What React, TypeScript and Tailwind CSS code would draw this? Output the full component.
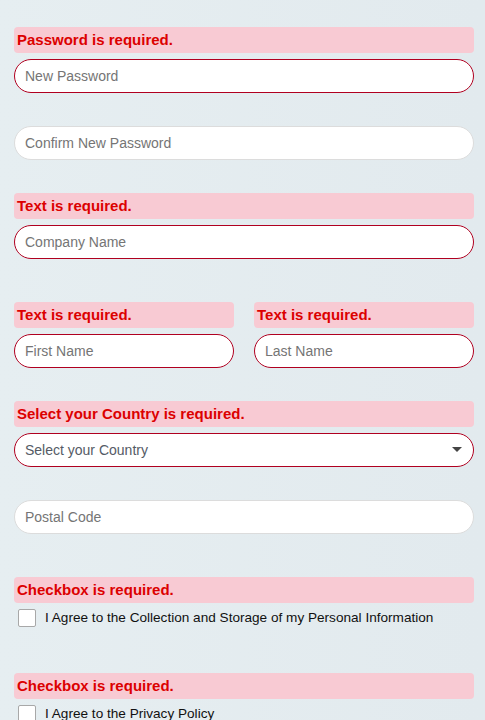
import React from 'react'

function ErrorBox({ text }: { text: string }) {
  return (
    <div className="h-[26px] rounded-[4px] bg-[#f8cad3] px-[3px] flex items-center mb-[6px]">
      <span className="text-[#dc0000] font-bold text-[15px] font-['Liberation_Sans',sans-serif]">{text}</span>
    </div>
  )
}

function Input({ placeholder, invalid }: { placeholder: string; invalid?: boolean }) {
  return (
    <div
      className={`h-[34px] rounded-full bg-white flex items-center px-[10px] border ${
        invalid ? 'border-[#b00020]' : 'border-[#dcdcdc]'
      }`}
    >
      <span className="text-[#757575] text-[14px] font-['Liberation_Sans',sans-serif]">{placeholder}</span>
    </div>
  )
}

function Checkbox({ label }: { label: string }) {
  return (
    <div className="flex items-center gap-[9px] pl-[4px] h-[18px]">
      <div className="w-[18px] h-[18px] bg-white border border-[#a8a8a8] rounded-[2px]" />
      <span className="text-[#111] text-[13.6px] font-['Liberation_Sans',sans-serif]">{label}</span>
    </div>
  )
}

export default function App() {
  return (
    <div className="w-[485px] h-[720px] overflow-hidden bg-gradient-to-r from-[#e6eef1] to-[#e2eaee] pl-[14px] pr-[11px] pt-[27px]">
      <div>
        <ErrorBox text="Password is required." />
        <Input placeholder="New Password" invalid />
      </div>
      <div className="mt-[33px]">
        <Input placeholder="Confirm New Password" />
      </div>
      <div className="mt-[33px]">
        <ErrorBox text="Text is required." />
        <Input placeholder="Company Name" invalid />
      </div>
      <div className="mt-[43px] grid grid-cols-2 gap-[20px]">
        <div>
          <ErrorBox text="Text is required." />
          <Input placeholder="First Name" invalid />
        </div>
        <div>
          <ErrorBox text="Text is required." />
          <Input placeholder="Last Name" invalid />
        </div>
      </div>
      <div className="mt-[33px]">
        <ErrorBox text="Select your Country is required." />
        <div className="h-[34px] rounded-full bg-white flex items-center justify-between pl-[10px] pr-[11px] border border-[#b00020]">
          <span className="text-[#555b66] text-[14px] font-['Liberation_Sans',sans-serif]">Select your Country</span>
          <svg width="10" height="6" viewBox="0 0 10 6">
            <path d="M0 0 L10 0 L5 5 Z" fill="#444" />
          </svg>
        </div>
      </div>
      <div className="mt-[33px]">
        <Input placeholder="Postal Code" />
      </div>
      <div className="mt-[43px]">
        <ErrorBox text="Checkbox is required." />
        <Checkbox label="I Agree to the Collection and Storage of my Personal Information" />
      </div>
      <div className="mt-[46px]">
        <ErrorBox text="Checkbox is required." />
        <Checkbox label="I Agree to the Privacy Policy" />
      </div>
    </div>
  )
}
